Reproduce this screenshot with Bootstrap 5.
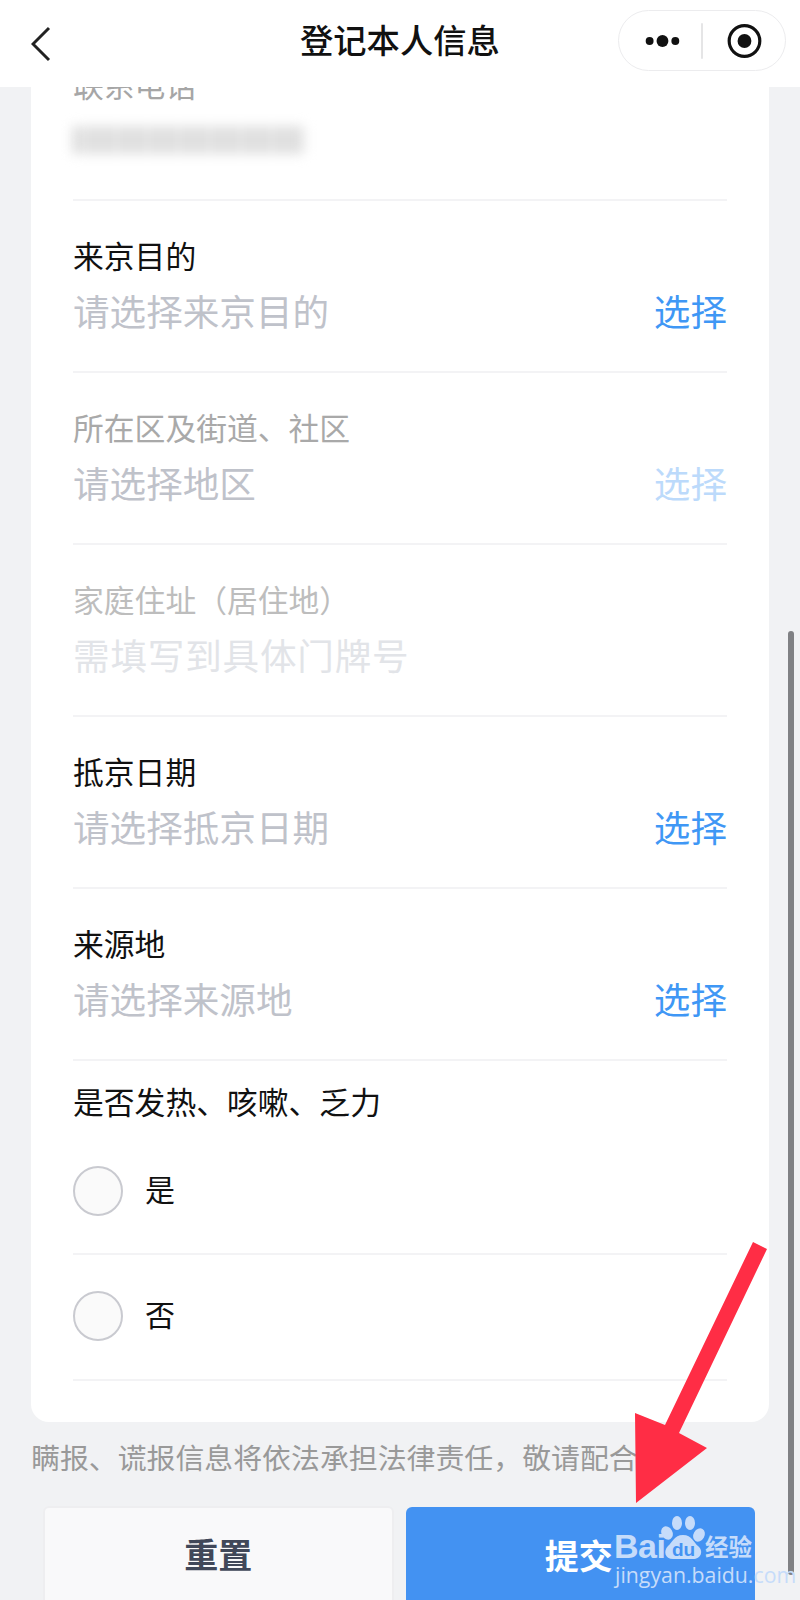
<!DOCTYPE html>
<html lang="zh-CN">
<head>
    <meta charset="UTF-8">
    <meta name="viewport" content="width=device-width, initial-scale=1.0">
    <title>登记本人信息</title>
    <link href="https://cdn.jsdelivr.net/npm/bootstrap@5.3.0/dist/css/bootstrap.min.css" rel="stylesheet">
    <style>
        body {
            font-family: "Liberation Sans", "Noto Sans CJK SC", sans-serif;
            background-color: #f1f2f4;
            color: #111;
        }
        .phone-page {
            width: 800px;
            height: 1600px;
            overflow: hidden;
            position: relative;
        }
        .top-bar {
            height: 87px;
            background-color: #fff;
            padding: 0 14px 0 31px;
        }
        .top-title {
            font-size: 33.3px;
            font-weight: 500;
            line-height: 40px;
            margin-left: 249px;
            margin-top: -3px;
        }
        .capsule {
            width: 168px;
            height: 61px;
            margin-top: -7px;
            border: 1px solid #ececee;
            border-radius: 31px;
            background-color: #fff;
        }
        .form-panel {
            margin: 0 31px;
            padding: 0 42px;
            height: 1335px;
            background-color: #fff;
            border-radius: 0 0 18px 18px;
            overflow: hidden;
        }
        .field-row {
            height: 172px;
            padding-top: 42px;
            border-bottom: 2px solid #f3f3f5;
        }
        .field-row.first-row {
            height: 129px;
            padding-top: 0;
        }
        .field-label {
            font-size: 30.8px;
            line-height: 30px;
            height: 30px;
            white-space: nowrap;
        }
        .first-row .field-label {
            margin-top: -15px;
            color: #a6a6a6;
        }
        .blur-phone {
            width: 232px;
            height: 28px;
            margin-top: 24px;
            margin-left: 0;
            background: repeating-linear-gradient(90deg, #d6d6d6 0 7px, #e8e8e8 7px 17px, #dadada 17px 26px, #ececec 26px 31px);
            filter: blur(6px);
        }
        .field-value {
            font-size: 36.6px;
            line-height: 44px;
            margin-top: 19px;
            color: #bfc2ca;
        }
        .pick-link {
            font-size: 36.6px;
            line-height: 44px;
            color: #3f97f5;
        }
        .is-off .field-label { color: #a9a9a9; }
        .is-off .pick-link { color: #bcdafb; }
        .is-faint .field-label { color: #bdbdbd; }
        .is-faint .field-value {
            color: #e2e4e8;
            letter-spacing: .8px;
        }
        .question-row {
            height: 194px;
            padding-top: 28px;
            border-bottom: 2px solid #f3f3f5;
        }
        .answer-row {
            height: 126px;
            padding-top: 36px;
            border-bottom: 2px solid #f3f3f5;
        }
        .question-row .answer-line {
            margin-top: 47px;
        }
        .answer-line {
            font-size: 30px;
            line-height: 50px;
        }
        .answer-line .form-check-input {
            width: 50px;
            height: 50px;
            margin: 0 22px 0 0;
            background-color: #fafafa;
            border: 2px solid #c9cad0;
            flex: none;
        }
        .notice-text {
            margin: 23px 0 0 31px;
            font-size: 28.9px;
            line-height: 28px;
            color: #999;
            white-space: nowrap;
        }
        .action-bar {
            margin: 33px 45px 0 43px;
            gap: 12px;
        }
        .action-bar .btn {
            height: 100px;
            padding: 0;
            font-size: 34px;
            line-height: 60px;
            font-weight: 700;
            border-radius: 6px;
            flex: 1 1 0;
        }
        .btn-reset {
            background-color: #f9f9fa;
            border: 2px solid #eeeef0;
            color: #414859;
            align-self: flex-start;
        }
        .action-bar .btn-submit {
            background-color: #4392f2;
            border: 0;
            color: #fff;
            margin-top: 1px;
            padding-right: 3px;
        }
        .scroll-thumb {
            position: absolute;
            left: 788px;
            top: 631px;
            width: 6px;
            height: 944px;
            border-radius: 3px;
            background-color: #808184;
        }
        .arrow-mark {
            position: absolute;
            left: 0;
            top: 0;
            pointer-events: none;
        }
        .mark-bai, .mark-jy, .mark-cn {
            position: absolute;
            color: #c6dcfa;
            white-space: nowrap;
        }
        .mark-bai {
            left: 614px;
            top: 1529px;
            font-size: 34px;
            line-height: 34px;
            font-weight: 700;
            letter-spacing: -.5px;
        }
        .mark-cn {
            left: 705px;
            top: 1534px;
            font-size: 23.5px;
            line-height: 28px;
            font-weight: 700;
        }
        .mark-jy {
            left: 615px;
            top: 1563px;
            font-size: 21.3px;
            line-height: 24px;
            font-family: "Open Sans", sans-serif;
        }
    </style>
</head>
<body class="m-0">
    <div class="phone-page">
        <header class="top-bar d-flex align-items-center">
            <svg width="20" height="36" viewBox="0 0 20 36">
                <path d="M18 2 L2 18 L18 34" fill="none" stroke="#222" stroke-width="3"/>
            </svg>
            <div class="top-title flex-grow-1">登记本人信息</div>
            <div class="capsule d-flex align-items-center">
                <svg width="168" height="59" viewBox="0 0 168 59">
                    <circle cx="31" cy="30" r="4" fill="#111"/>
                    <circle cx="44" cy="30" r="6" fill="#111"/>
                    <circle cx="57" cy="30" r="4" fill="#111"/>
                    <line x1="84" y1="12" x2="84" y2="48" stroke="#dcdcde" stroke-width="1.5"/>
                    <circle cx="127" cy="30" r="15.5" fill="none" stroke="#111" stroke-width="3.2"/>
                    <circle cx="127" cy="30" r="7" fill="#111"/>
                </svg>
            </div>
        </header>

        <main class="form-panel">
            <div class="field-row first-row">
                <div class="field-label">联系电话</div>
                <div class="blur-phone"></div>
            </div>
            <div class="field-row">
                <div class="field-label">来京目的</div>
                <div class="d-flex justify-content-between field-value">
                    <span>请选择来京目的</span><span class="pick-link">选择</span>
                </div>
            </div>
            <div class="field-row is-off">
                <div class="field-label">所在区及街道、社区</div>
                <div class="d-flex justify-content-between field-value">
                    <span>请选择地区</span><span class="pick-link">选择</span>
                </div>
            </div>
            <div class="field-row is-faint">
                <div class="field-label">家庭住址（居住地）</div>
                <div class="field-value">需填写到具体门牌号</div>
            </div>
            <div class="field-row">
                <div class="field-label">抵京日期</div>
                <div class="d-flex justify-content-between field-value">
                    <span>请选择抵京日期</span><span class="pick-link">选择</span>
                </div>
            </div>
            <div class="field-row">
                <div class="field-label">来源地</div>
                <div class="d-flex justify-content-between field-value">
                    <span>请选择来源地</span><span class="pick-link">选择</span>
                </div>
            </div>
            <div class="question-row">
                <div class="field-label">是否发热、咳嗽、乏力</div>
                <label class="answer-line d-flex align-items-center">
                    <input class="form-check-input" type="radio" name="fever">是
                </label>
            </div>
            <div class="answer-row">
                <label class="answer-line d-flex align-items-center">
                    <input class="form-check-input" type="radio" name="fever">否
                </label>
            </div>
        </main>

        <p class="notice-text mb-0">瞒报、谎报信息将依法承担法律责任，敬请配合。</p>

        <div class="action-bar d-flex">
            <button type="button" class="btn btn-reset">重置</button>
            <button type="button" class="btn btn-submit">提交</button>
        </div>

        <div class="scroll-thumb"></div>

        <svg class="arrow-mark" width="800" height="1600" viewBox="0 0 800 1600">
            <path d="M753 1242 L767 1249 L679 1433 L707 1448 L636 1503 L635 1413 L665 1425 Z" fill="#ff2d45"/>
            <g fill="#c6dcfa">
                <ellipse cx="667" cy="1533" rx="5.5" ry="7" transform="rotate(-30 667 1533)"/>
                <ellipse cx="677" cy="1523" rx="5" ry="7"/>
                <ellipse cx="690" cy="1523" rx="5" ry="7"/>
                <ellipse cx="699" cy="1535" rx="5.5" ry="7" transform="rotate(30 699 1535)"/>
                <path d="M683 1535 C692 1535 694 1543 698 1546 C704 1551 701 1559 693 1559 L673 1559 C665 1559 663 1551 668 1546 C672 1543 674 1535 683 1535 Z"/>
                <text x="672" y="1556" font-family="Liberation Sans, sans-serif" font-size="19" font-weight="700" fill="#4392f2" textLength="23">du</text>
            </g>
        </svg>
        <span class="mark-bai">Bai</span>
        <span class="mark-cn">经验</span>
        <span class="mark-jy">jingyan.baidu.com</span>
    </div>

    <script src="https://cdn.jsdelivr.net/npm/bootstrap@5.3.0/dist/js/bootstrap.bundle.min.js"></script>
</body>
</html>
